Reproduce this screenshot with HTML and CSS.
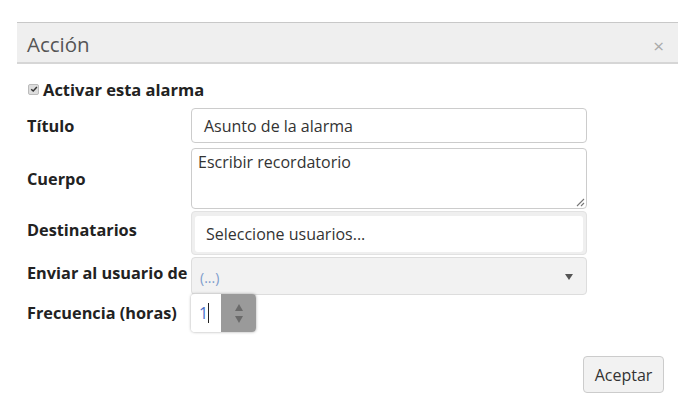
FILE: index.html
```html
<!DOCTYPE html>
<html lang="es">
<head>
<meta charset="utf-8">
<title>Acción</title>
<link rel="stylesheet" href="styles.css">
</head>
<body>
<div class="dialog">
  <div class="dlg-header">
    <span class="dlg-title">Acción</span>
    <span class="dlg-close">×</span>
  </div>
  <div class="dlg-body">
    <label class="check-row"><span class="chk"><svg viewBox="0 0 10 10" width="8" height="8"><path d="M1.5 5.2 L4 7.6 L8.6 2.4" fill="none" stroke="#333" stroke-width="1.8"/></svg></span>Activar esta alarma</label>
    <div class="row r-title">
      <div class="lbl">Título</div>
      <div class="ctl input">Asunto de la alarma</div>
    </div>
    <div class="row r-body">
      <div class="lbl">Cuerpo</div>
      <div class="ctl textarea">Escribir recordatorio
        <svg class="grip" viewBox="0 0 10 10" width="10" height="10"><path d="M9 2 L2 9 M9 6 L6 9" stroke="#777" stroke-width="1.1"/></svg>
      </div>
    </div>
    <div class="row r-dest">
      <div class="lbl lbl-up">Destinatarios</div>
      <div class="ctl multi"><div class="multi-inner">Seleccione usuarios...</div></div>
    </div>
    <div class="row r-send">
      <div class="lbl lbl-up">Enviar al usuario de</div>
      <div class="ctl select"><span class="ph">(...)</span><span class="arrow"></span></div>
    </div>
    <div class="row r-freq">
      <div class="lbl">Frecuencia (horas)</div>
      <div class="num"><div class="num-val">1<span class="caret"></span></div><div class="spin"><span class="up"></span><span class="down"></span></div></div>
    </div>
    <div class="footer">
      <button class="btn">Aceptar</button>
    </div>
  </div>
</div>
</body>
</html>
```
FILE: styles.css
```css
* { box-sizing: border-box; }
body {
  margin: 0;
  background: #fff;
  font-family: "Open Sans", "Noto Sans", sans-serif;
  color: #333;
}
.dialog {
  margin: 22px 0 0 17px;
  width: 661px;
}
.dlg-header {
  height: 42px;
  background: #efefef;
  border-top: 1px solid #c8c8c8;
  border-bottom: 2px solid #d6d6d6;
  display: flex;
  align-items: center;
  justify-content: space-between;
  padding: 0 14px 0 10px;
}
.dlg-title {
  font-size: 20.5px;
  color: #555;
  padding-top: 3px;
}
.dlg-close {
  font-size: 19px;
  color: #aaa;
  padding-top: 6px;
}
.dlg-body {
  padding: 0 0 0 10px;
}
.check-row {
  display: flex;
  align-items: center;
  height: 20px;
  margin-top: 15px;
  font-size: 16.5px;
  font-weight: 700;
  color: #222;
}
.chk {
  width: 11px;
  height: 11px;
  margin: 0 4px 0 1px;
  border: 1px solid #bbb;
  border-radius: 2px;
  background: #ddd;
  display: flex;
  align-items: center;
  justify-content: center;
}
.row {
  display: flex;
  align-items: center;
}
.lbl {
  width: 164px;
  flex: none;
  font-size: 16.3px;
  font-weight: 700;
  color: #222;
  white-space: nowrap;
}
.lbl-up { margin-bottom: 6px; }
.ctl {
  width: 396px;
  font-size: 16px;
  color: #333;
}
.input {
  height: 35px;
  border: 1px solid #ccc;
  border-radius: 4px;
  padding: 0 12px;
  display: flex;
  align-items: center;
  background: #fff;
}
.r-title { margin-top: 9px; }
.r-body { margin-top: 5px; }
.textarea {
  position: relative;
  height: 61px;
  border: 1px solid #ccc;
  border-radius: 4px;
  padding: 2px 6px;
  background: #fff;
}
.grip {
  position: absolute;
  right: 1px;
  bottom: 1px;
}
.r-dest { margin-top: 2px; }
.multi {
  height: 44px;
  border: 1px solid #e2e2e2;
  border-radius: 4px;
  background: #efefef;
  padding: 4px 3px 2px 3px;
}
.multi-inner {
  height: 100%;
  background: #fff;
  border-radius: 3px;
  display: flex;
  align-items: center;
  padding: 0 11px;
}
.r-send { margin-top: 2px; }
.select {
  height: 38px;
  border: 1px solid #ddd;
  border-radius: 4px;
  background: #f2f2f2;
  display: flex;
  align-items: center;
  justify-content: space-between;
  padding: 2px 13px 0 8px;
}
.ph {
  font-size: 14px;
  color: #7d9ccc;
}
.arrow {
  width: 0;
  height: 0;
  border-left: 4.5px solid transparent;
  border-right: 4.5px solid transparent;
  border-top: 6px solid #555;
}
.r-freq { margin-top: -1px; }
.num {
  display: flex;
  width: 65px;
  height: 38px;
  border-radius: 4px;
  box-shadow: 0 0 3px rgba(0,0,0,0.35);
  overflow: hidden;
}
.num-val {
  width: 30px;
  background: #fff;
  display: flex;
  align-items: center;
  padding-left: 8px;
  font-size: 16px;
  color: #4a6fc8;
}
.caret {
  display: inline-block;
  width: 1px;
  height: 20px;
  background: #222;
  margin-left: 0;
}
.spin {
  flex: 1;
  background: #9a9a9a;
  display: flex;
  flex-direction: column;
  align-items: center;
  justify-content: center;
  gap: 5px;
}
.up {
  border-left: 4.5px solid transparent;
  border-right: 4.5px solid transparent;
  border-bottom: 7px solid #6a6a6a;
}
.down {
  border-left: 4.5px solid transparent;
  border-right: 4.5px solid transparent;
  border-top: 7px solid #6a6a6a;
}
.footer {
  display: flex;
  justify-content: flex-end;
  padding-right: 14px;
  margin-top: 24px;
}
.btn {
  width: 81px;
  height: 37px;
  border: 1px solid #ccc;
  border-radius: 4px;
  background: #f2f2f2;
  font-family: "Open Sans", "Noto Sans", sans-serif;
  font-size: 16px;
  color: #333;
  padding: 0;
}
```
